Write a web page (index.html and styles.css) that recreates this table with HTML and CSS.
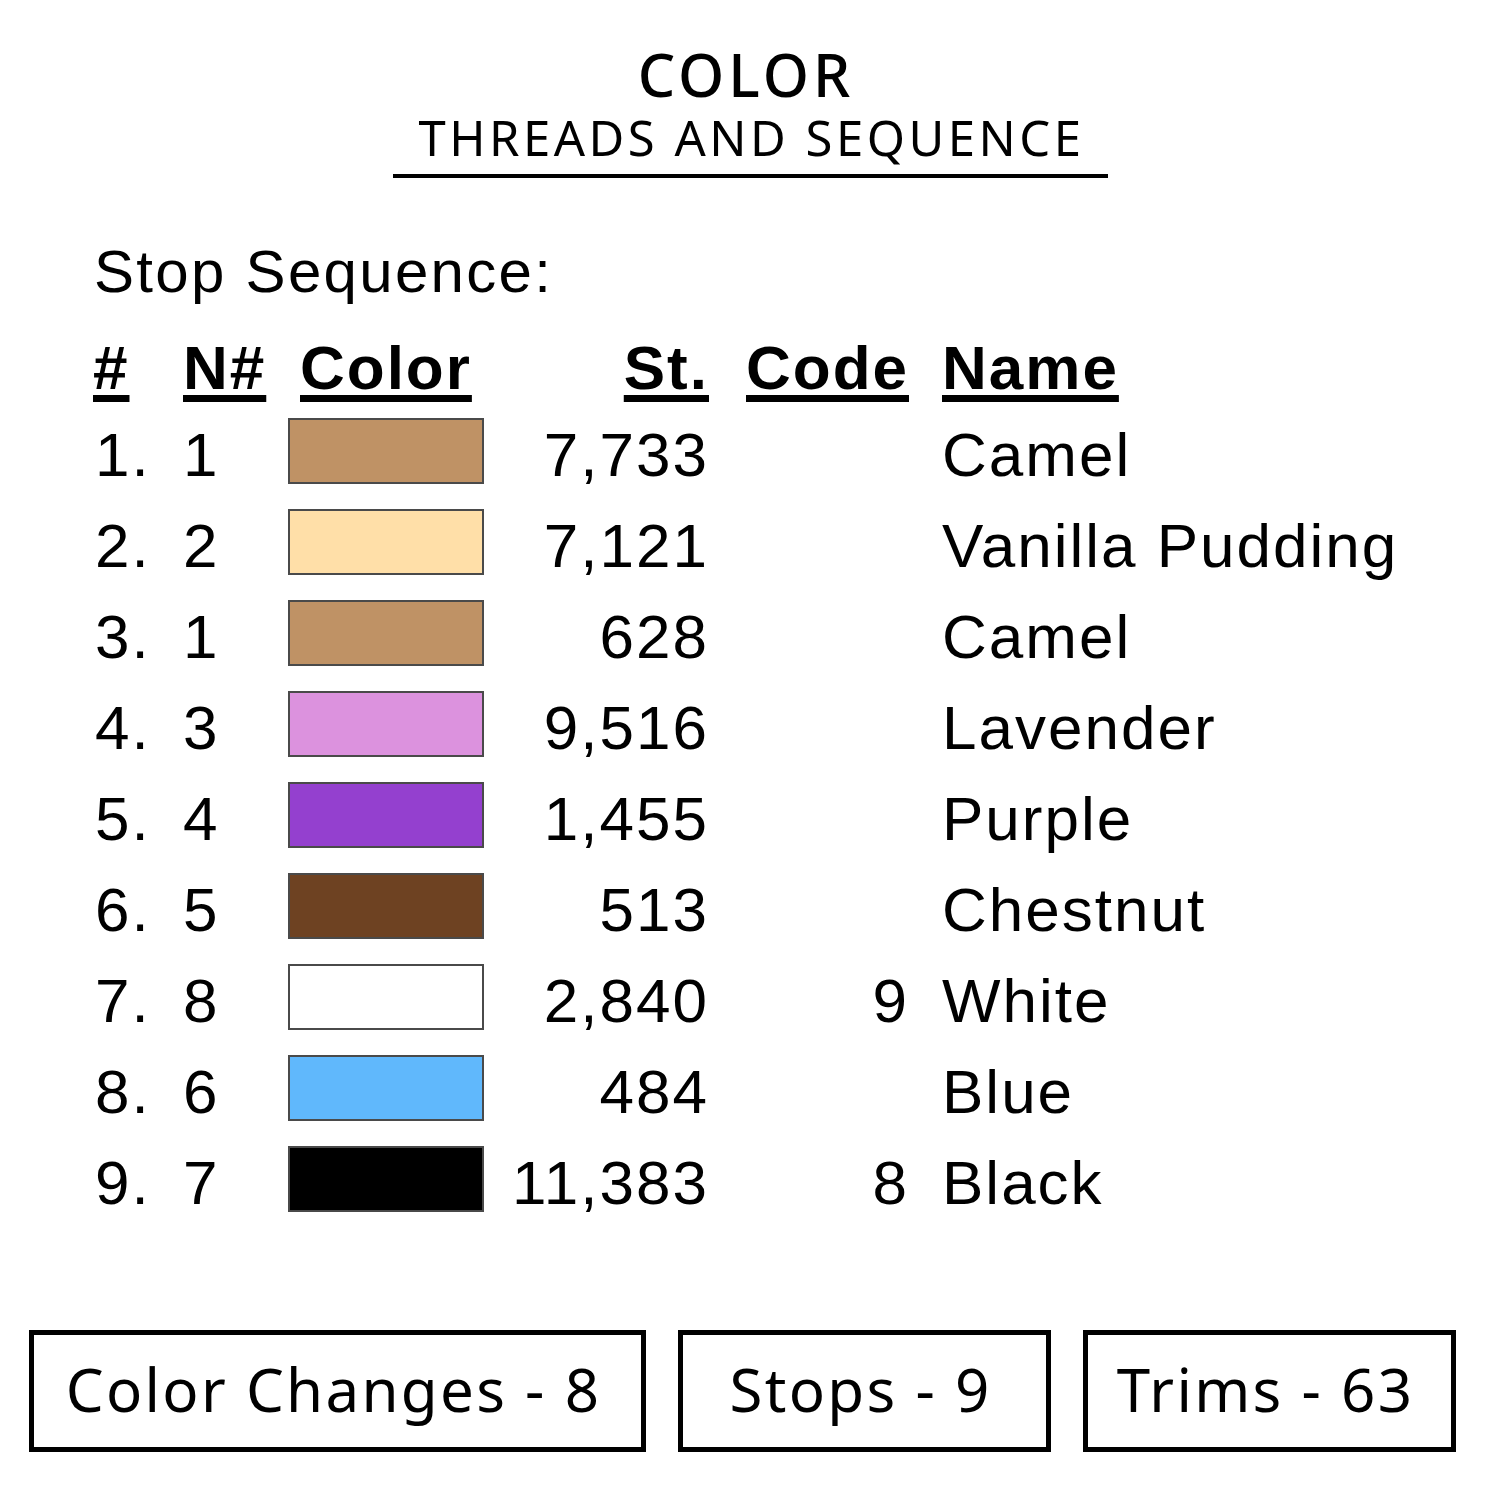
FILE: index.html
```html
<!DOCTYPE html>
<html>
<head>
<meta charset="utf-8">
<link rel="stylesheet" href="styles.css">
</head>
<body>
<div class="page">
  <header class="head">
    <div class="title">COLOR</div>
    <div class="subtitle">THREADS AND SEQUENCE</div>
    <div class="rule"></div>
  </header>

  <section class="seq">
    <div class="seq-title">Stop Sequence:</div>
    <div class="table">
      <div class="th c1">#</div>
      <div class="th c2">N#</div>
      <div class="th c3">Color</div>
      <div class="th c4">St.</div>
      <div class="th c5">Code</div>
      <div class="th c6">Name</div>

      <div class="td c1">1.</div><div class="td c2">1</div><div class="td c3"><span class="sw" style="background:#bf9265"></span></div><div class="td c4">7,733</div><div class="td c5"></div><div class="td c6">Camel</div>
      <div class="td c1">2.</div><div class="td c2">2</div><div class="td c3"><span class="sw" style="background:#ffdfa8"></span></div><div class="td c4">7,121</div><div class="td c5"></div><div class="td c6">Vanilla Pudding</div>
      <div class="td c1">3.</div><div class="td c2">1</div><div class="td c3"><span class="sw" style="background:#bf9265"></span></div><div class="td c4">628</div><div class="td c5"></div><div class="td c6">Camel</div>
      <div class="td c1">4.</div><div class="td c2">3</div><div class="td c3"><span class="sw" style="background:#dc92de"></span></div><div class="td c4">9,516</div><div class="td c5"></div><div class="td c6">Lavender</div>
      <div class="td c1">5.</div><div class="td c2">4</div><div class="td c3"><span class="sw" style="background:#9440cf"></span></div><div class="td c4">1,455</div><div class="td c5"></div><div class="td c6">Purple</div>
      <div class="td c1">6.</div><div class="td c2">5</div><div class="td c3"><span class="sw" style="background:#6e4222"></span></div><div class="td c4">513</div><div class="td c5"></div><div class="td c6">Chestnut</div>
      <div class="td c1">7.</div><div class="td c2">8</div><div class="td c3"><span class="sw" style="background:#ffffff"></span></div><div class="td c4">2,840</div><div class="td c5">9</div><div class="td c6">White</div>
      <div class="td c1">8.</div><div class="td c2">6</div><div class="td c3"><span class="sw" style="background:#60b8fc"></span></div><div class="td c4">484</div><div class="td c5"></div><div class="td c6">Blue</div>
      <div class="td c1">9.</div><div class="td c2">7</div><div class="td c3"><span class="sw" style="background:#000000"></span></div><div class="td c4">11,383</div><div class="td c5">8</div><div class="td c6">Black</div>
    </div>
  </section>

  <footer class="stats">
    <div class="box box-wide">Color Changes - 8</div>
    <div class="box">Stops - 9</div>
    <div class="box">Trims - 63</div>
  </footer>
</div>
</body>
</html>
```

FILE: styles.css
```css
* { box-sizing: border-box; }
html, body { margin: 0; padding: 0; background: #fff; }
body { width: 1500px; height: 1500px; overflow: hidden; color: #000; }

.page { width: 1500px; height: 1500px; display: flex; flex-direction: column; }

.head {
  display: flex;
  flex-direction: column;
  align-items: center;
  padding-top: 44px;
  font-family: "Noto Sans", sans-serif;
}
.title {
  font-size: 59px;
  line-height: 60px;
  font-weight: 500;
  letter-spacing: 4px;
  margin-left: -8px;
}
.subtitle {
  font-size: 49px;
  line-height: 66px;
  font-weight: 400;
  letter-spacing: 3.5px;
  padding-left: 3px;
}
.rule {
  width: 715px;
  height: 4px;
  background: #000;
  margin-top: 4px;
  margin-left: 1px;
}

.seq {
  font-family: "Liberation Sans", Arial, sans-serif;
  padding-left: 93px;
  margin-top: 59px;
}
.seq-title {
  font-size: 60px;
  line-height: 70px;
  letter-spacing: 2.3px;
  margin-left: 1px;
}
.table {
  display: grid;
  grid-template-columns: 90px 105px 196px 223px 200px auto;
  grid-template-rows: 83px;
  grid-auto-rows: 91px;
  align-items: center;
  margin-top: 19px;
  font-size: 62px;
  line-height: 91px;
  letter-spacing: 2px;
}
.th {
  line-height: 83px;
  font-weight: 700;
  text-decoration: underline;
  text-decoration-thickness: 7px;
  text-underline-offset: 6px;
}
.th.c3 { padding-left: 12px; }
.c6 { padding-left: 35px; white-space: nowrap; }
.td.c1 { padding-left: 2px; }
.c4, .c5 { text-align: right; margin-right: -2px; }
.td.c3 {
  display: flex;
  align-items: flex-start;
  height: 91px;
  padding-top: 9px;
}
.sw {
  display: block;
  width: 196px;
  height: 66px;
  border: 2px solid #4a4a4a;
}

.stats {
  display: flex;
  gap: 32px;
  padding-left: 29px;
  margin-top: auto;
  margin-bottom: 48px;
  font-family: "Noto Sans", sans-serif;
}
.box {
  width: 373px;
  height: 122px;
  border: 5px solid #000;
  display: flex;
  align-items: center;
  justify-content: center;
  font-size: 60px;
  letter-spacing: 2.3px;
  padding-right: 8px;
  padding-bottom: 4px;
}
.box-wide { width: 617px; }
```
